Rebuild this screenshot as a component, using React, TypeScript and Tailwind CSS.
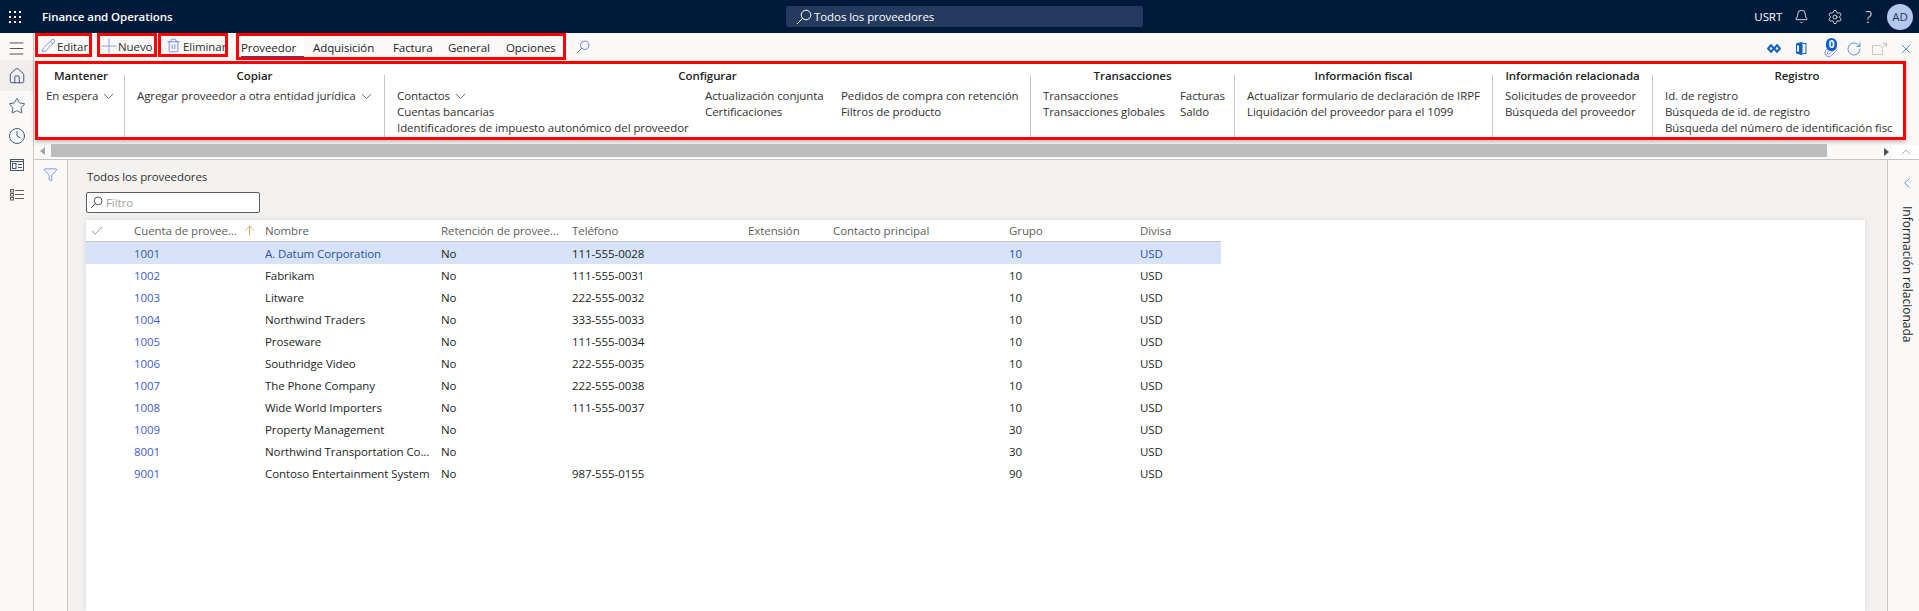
import React from 'react';
import { Bell, ChevronDown, ChevronLeft, ChevronUp, Clock, Filter, Home, Paperclip, Pencil, Plus, RotateCw, Settings, Star, Trash2, X, Check, ArrowUp, Menu } from 'lucide-react';

const rows = [
    ['1001', 'A. Datum Corporation', 'No', '111-555-0028', '10', 'USD'],
    ['1002', 'Fabrikam', 'No', '111-555-0031', '10', 'USD'],
    ['1003', 'Litware', 'No', '222-555-0032', '10', 'USD'],
    ['1004', 'Northwind Traders', 'No', '333-555-0033', '10', 'USD'],
    ['1005', 'Proseware', 'No', '111-555-0034', '10', 'USD'],
    ['1006', 'Southridge Video', 'No', '222-555-0035', '10', 'USD'],
    ['1007', 'The Phone Company', 'No', '222-555-0038', '10', 'USD'],
    ['1008', 'Wide World Importers', 'No', '111-555-0037', '10', 'USD'],
    ['1009', 'Property Management', 'No', '', '30', 'USD'],
    ['8001', 'Northwind Transportation Co...', 'No', '', '30', 'USD'],
    ['9001', 'Contoso Entertainment System', 'No', '987-555-0155', '90', 'USD'],
];

const gridCols = 'grid grid-cols-[48px_131px_176px_131px_176px_85px_177px_131px_80px] items-center';

// magnifier with the long handle going down-left
const SearchIcon = ({ size, className }: { size: number; className?: string }) => (
    <svg width={size} height={size} viewBox="0 0 16 16" fill="none" stroke="currentColor" strokeWidth="1" className={className}>
        <circle cx="10" cy="6" r="4.8" />
        <path d="M6.6 9.4 1 15" />
    </svg>
);

const Divider = () => <div className="w-px h-[62px] bg-[#c8c6c4] self-end shrink-0" />;

const Title = ({ children }: { children: React.ReactNode }) => (
    <div className="h-4 leading-4 text-center font-semibold text-[#201f1e]">{children}</div>
);

const Caret = () => <ChevronDown size={17} strokeWidth={1} className="inline-block ml-[2px] -my-[3px] -mt-[4px]" />;

const Col = ({ className, items }: { className?: string; items: React.ReactNode[] }) => (
    <div className={`flex flex-col shrink-0 ${className ?? ''}`}>
        {items.map((item, i) => (
            <div key={i} className="h-4 leading-4 whitespace-nowrap">{item}</div>
        ))}
    </div>
);

const Tab = ({ label, className }: { label: string; className: string }) => (
    <div className={`h-full flex items-center pt-[3px] font-medium text-[#201f1e] ${className}`}>{label}</div>
);

const App = () => {
    return (
        <div className="w-[1919px] h-[611px] overflow-hidden flex flex-col bg-[#faf9f8] text-[11.5px] tracking-[-0.08px] text-[#323130] font-['Open_Sans','Noto_Sans',sans-serif]">
            {/* top bar */}
            <header className="h-[33px] shrink-0 bg-[#001a3b] text-white flex items-center">
                <div className="w-[34px] pl-[8px]">
                    <svg width="14" height="14" viewBox="0 0 14 14" fill="#fff">
                        {[1, 6, 11].map((y) => [1, 6, 11].map((x) => <rect key={`${x}-${y}`} x={x} y={y} width="2" height="2" />))}
                    </svg>
                </div>
                <div className="ml-[8px] w-[744px] font-semibold">Finance and Operations</div>
                <div className="w-[357px] h-[21px] bg-[#243a5e] rounded-[2px] flex items-center pl-[10px] gap-[2px]">
                    <SearchIcon size={16} />
                    <span>Todos los proveedores</span>
                </div>
                <div className="ml-auto flex items-center pr-[6px]">
                    <span className="w-[40px]">USRT</span>
                    <Bell size={15} strokeWidth={1.3} />
                    <Settings size={16} strokeWidth={1.2} className="ml-[18px]" />
                    <span className="ml-[22px] text-[16px] font-light">?</span>
                    <div className="ml-[15px] w-[26px] h-[26px] rounded-full bg-[#b4c7ef] text-[#243a5e] flex items-center justify-center">AD</div>
                </div>
            </header>

            <div className="flex-1 flex min-h-0">
                {/* left nav */}
                <nav className="w-[34px] shrink-0 border-r border-[#c8c6c4] flex flex-col text-[#3b3a39]">
                    <div className="h-[27px] pt-[4px] flex items-center justify-center"><Menu size={19} strokeWidth={1.1} /></div>
                    <div className="h-[31px] bg-[#f0efee] flex items-center justify-center"><Home size={18} strokeWidth={1.1} className="text-[#1b3f66]" /></div>
                    <div className="h-[30px] flex items-center justify-center"><Star size={18} strokeWidth={1.1} className="text-[#1b3f66]" /></div>
                    <div className="h-[29px] flex items-center justify-center"><Clock size={18} strokeWidth={1.1} className="text-[#1b3f66]" /></div>
                    <div className="h-[30px] flex items-center justify-center">
                        <svg width="16" height="14" viewBox="0 0 16 14" fill="none" stroke="#44546a">
                            <rect x="1.5" y="1.5" width="13" height="11" />
                            <path d="M1.5 3.5h13" />
                            <rect x="3.5" y="5.5" width="3.5" height="5" />
                            <path d="M9 6.5h4M9 9.5h4" />
                        </svg>
                    </div>
                    <div className="h-[29px] flex items-center justify-center">
                        <svg width="16" height="14" viewBox="0 0 16 14" fill="none" stroke="#605e5c">
                            <rect x="1.5" y="1.5" width="3" height="2.5" />
                            <rect x="1.5" y="5.5" width="3" height="2.5" />
                            <rect x="1.5" y="9.5" width="3" height="2.5" />
                            <path d="M6 2.5h9M6 6.5h9M6 10.5h9" />
                        </svg>
                    </div>
                </nav>

                <main className="flex-1 flex flex-col min-w-0">
                    {/* toolbar */}
                    <div className="h-[28px] shrink-0 flex items-start">
                        <div className="ml-[1px] w-[57px] h-[24px] border-[3px] border-[#f00] flex items-center pt-[3px] pl-[3px] gap-[1px]">
                            <Pencil size={15} strokeWidth={1.1} className="text-[#4f6bed] shrink-0 -mt-[2px]" />
                            <span>Editar</span>
                        </div>
                        <div className="ml-[5px] w-[60px] h-[24px] border-[3px] border-[#f00] flex items-center pt-[3px]">
                            <Plus size={24} strokeWidth={1} className="text-[#8f9fe6] shrink-0 -mx-[3px] -my-[4px] -mt-[6px]" />
                            <span>Nuevo</span>
                        </div>
                        <div className="ml-[1px] w-[70px] h-[24px] border-[3px] border-[#f00] flex items-center pt-[3px] pl-[5px] gap-[2px]">
                            <Trash2 size={15} strokeWidth={1.2} className="text-[#4f6bed] shrink-0 -mt-[2px]" />
                            <span>Eliminar</span>
                        </div>
                        <div className="ml-[8px] w-[330px] h-[27px] border-[3px] border-[#f00] flex items-center pl-[2px]">
                            <Tab label="Proveedor" className="w-[63px] bg-white border-b border-[#1f4e9e]" />
                            <Tab label="Adquisición" className="ml-[9px] w-[80px]" />
                            <Tab label="Factura" className="w-[55px]" />
                            <Tab label="General" className="w-[58px]" />
                            <Tab label="Opciones" className="w-[55px]" />
                        </div>
                        <SearchIcon size={14} className="ml-[10px] mt-[7px] text-[#4f6bed]" />
                        <div className="ml-auto h-[28px] pt-[3px] flex items-center pr-[5px]">
                            <svg width="14" height="9" viewBox="0 0 14 9" fill="none" stroke="#0f5fc2" strokeWidth="2">
                                <path d="M4 1.2 6.8 4.5 4 7.8 1.2 4.5zM10 1.2l2.8 3.3L10 7.8 7.2 4.5z" />
                            </svg>
                            <svg width="12" height="15" viewBox="0 0 12 15" className="ml-[14px]">
                                <path d="M1 2.5 7.5.8v13.4L1 12.5z" fill="#0f5fc2" />
                                <path d="M8 2.5h3v10H8" fill="none" stroke="#0f5fc2" />
                                <path d="M3 4.5v6" stroke="#fff" strokeWidth="2" />
                            </svg>
                            <div className="ml-[16px] relative w-[14px] h-[18px]">
                                <Paperclip size={15} strokeWidth={1.2} className="text-[#4f6bed] mt-[3px]" />
                                <span className="absolute -top-[2px] left-[3px] w-[11px] h-[13px] rounded-full bg-[#0f5fc2] text-white text-[10px] leading-[13px] text-center font-bold">0</span>
                            </div>
                            <RotateCw size={16} strokeWidth={1} className="ml-[9px] text-[#0f5fc2]" />
                            <svg width="15" height="12" viewBox="0 0 15 12" fill="none" stroke="#c8c6c4" className="ml-[10px]">
                                <path d="M9 2.5H.5v9h10V6" />
                                <path d="M9 5l5-4M11 .5h3.5V4" />
                            </svg>
                            <X size={16} strokeWidth={1} className="ml-[11px] text-[#0f5fc2]" />
                        </div>
                    </div>

                    {/* ribbon */}
                    <div className="ml-[1px] w-[1871px] h-[79px] shrink-0 border-[3px] border-[#f00] bg-white shadow-[0_2px_4px_rgba(0,0,0,0.25)] flex">
                        <div className="w-[86px] pt-[4px] shrink-0">
                            <Title>Mantener</Title>
                            <Col className="mt-1 pl-[8px]" items={[<>En espera<Caret /></>]} />
                        </div>
                        <Divider />
                        <div className="w-[259px] pt-[4px] shrink-0">
                            <Title>Copiar</Title>
                            <Col className="mt-1 pl-[12px]" items={[<>Agregar proveedor a otra entidad jurídica<Caret /></>]} />
                        </div>
                        <Divider />
                        <div className="w-[645px] pt-[4px] shrink-0">
                            <Title>Configurar</Title>
                            <div className="mt-1 flex pl-[12px]">
                                <Col className="w-[308px]" items={[<>Contactos<Caret /></>, 'Cuentas bancarias', 'Identificadores de impuesto autonómico del proveedor']} />
                                <Col className="w-[136px]" items={['Actualización conjunta', 'Certificaciones']} />
                                <Col items={['Pedidos de compra con retención', 'Filtros de producto']} />
                            </div>
                        </div>
                        <Divider />
                        <div className="w-[203px] pt-[4px] shrink-0">
                            <Title>Transacciones</Title>
                            <div className="mt-1 flex pl-[12px]">
                                <Col className="w-[137px]" items={['Transacciones', 'Transacciones globales']} />
                                <Col items={['Facturas', 'Saldo']} />
                            </div>
                        </div>
                        <Divider />
                        <div className="w-[257px] pt-[4px] shrink-0">
                            <Title>Información fiscal</Title>
                            <Col className="mt-1 pl-[12px]" items={['Actualizar formulario de declaración de IRPF', 'Liquidación del proveedor para el 1099']} />
                        </div>
                        <Divider />
                        <div className="w-[159px] pt-[4px] shrink-0">
                            <Title>Información relacionada</Title>
                            <Col className="mt-1 pl-[12px]" items={['Solicitudes de proveedor', 'Búsqueda del proveedor']} />
                        </div>
                        <Divider />
                        <div className="flex-1 min-w-0 pt-[4px] overflow-hidden">
                            <div className="w-[288px]"><Title>Registro</Title></div>
                            <Col className="mt-1 pl-[12px]" items={['Id. de registro', 'Búsqueda de id. de registro', 'Búsqueda del número de identificación fisc']} />
                        </div>
                    </div>

                    {/* horizontal scrollbar */}
                    <div className="h-[20px] shrink-0 border-b border-[#c8c6c4] flex items-end">
                        <div className="w-[17px] h-[15px] flex items-center pl-[6px] pb-[2px]">
                            <div className="w-0 h-0 border-y-[4px] border-y-transparent border-r-[5px] border-r-[#a6a6a6]" />
                        </div>
                        <div className="w-[1776px] h-[13px] mb-[2px] bg-[#bdbdbd]" />
                        <div className="w-[65px] h-[15px] flex items-center justify-end pr-[3px]">
                            <div className="w-0 h-0 border-y-[4px] border-y-transparent border-l-[5px] border-l-[#505050]" />
                        </div>
                        <div className="w-[27px] h-[14px] bg-white flex items-center justify-center">
                            <ChevronUp size={16} strokeWidth={1} className="text-[#8a8886]" />
                        </div>
                    </div>

                    <div className="flex-1 flex min-h-0">
                        {/* filter pane */}
                        <div className="w-[34px] shrink-0 border-r border-[#c8c6c4] flex justify-center pt-[7px] pr-[1px]">
                            <Filter size={15} strokeWidth={1.1} className="text-[#4f6bed]" />
                        </div>

                        {/* list page */}
                        <div className="flex-1 bg-[#f3f2f1] pl-[18px] pr-[22px] pt-[9px] flex flex-col min-w-0">
                            <div className="h-4 leading-4 pl-[1px]">Todos los proveedores</div>
                            <div className="mt-[7px] w-[174px] h-[21px] shrink-0 bg-white border border-[#605e5c] rounded-[2px] flex items-center pl-[3px] gap-[3px] text-[#a19f9d]">
                                <SearchIcon size={13} className="text-[#323130]" />
                                <span>Filtro</span>
                            </div>
                            <div className="mt-[7px] flex-1 bg-white shadow-[0_0_6px_rgba(0,0,0,0.12)]">
                                <div className={`${gridCols} w-[1135px] h-[22px] border-b border-[#c8c6c4] text-[#605e5c] whitespace-nowrap`}>
                                    <Check size={14} strokeWidth={1.2} className="ml-[4px]" />
                                    <div className="flex items-center justify-between pr-[8px]">
                                        <span>Cuenta de provee...</span>
                                        <ArrowUp size={15} strokeWidth={1} className="text-[#c7761a]" />
                                    </div>
                                    <div>Nombre</div>
                                    <div>Retención de provee...</div>
                                    <div>Teléfono</div>
                                    <div>Extensión</div>
                                    <div>Contacto principal</div>
                                    <div className="-ml-[1px]">Grupo</div>
                                    <div className="-ml-[1px]">Divisa</div>
                                </div>
                                {rows.map((row, i) => {
                                    const selected = i === 0;
                                    return (
                                        <div key={row[0]} className={`${gridCols} w-[1135px] h-[22px] pt-[1px] ${selected ? 'bg-[#d7e3f9]' : ''}`}>
                                            <div />
                                            <div className={selected ? 'text-[#3a5a9b]' : 'text-[#3f5ccf]'}>{row[0]}</div>
                                            <div className={`whitespace-nowrap ${selected ? 'text-[#2b4fa5]' : 'text-[#201f1e]'}`}>{row[1]}</div>
                                            <div className="text-[#201f1e]">{row[2]}</div>
                                            <div className="text-[#201f1e]">{row[3]}</div>
                                            <div />
                                            <div />
                                            <div className={`-ml-[1px] ${selected ? 'text-[#2b4fa5]' : 'text-[#201f1e]'}`}>{row[4]}</div>
                                            <div className={`-ml-[1px] ${selected ? 'text-[#2b4fa5]' : 'text-[#201f1e]'}`}>{row[5]}</div>
                                        </div>
                                    );
                                })}
                            </div>
                        </div>

                        {/* related info pane */}
                        <div className="w-[32px] shrink-0 border-l border-[#c8c6c4] flex flex-col items-center pt-[14px] pl-[6px]">
                            <ChevronLeft size={18} strokeWidth={1} className="text-[#2f6fb0]" />
                            <div className="mt-[14px] [writing-mode:vertical-rl] whitespace-nowrap text-[12px] tracking-normal text-[#201f1e]">Información relacionada</div>
                        </div>
                    </div>
                </main>
            </div>
        </div>
    );
};

export default App;
